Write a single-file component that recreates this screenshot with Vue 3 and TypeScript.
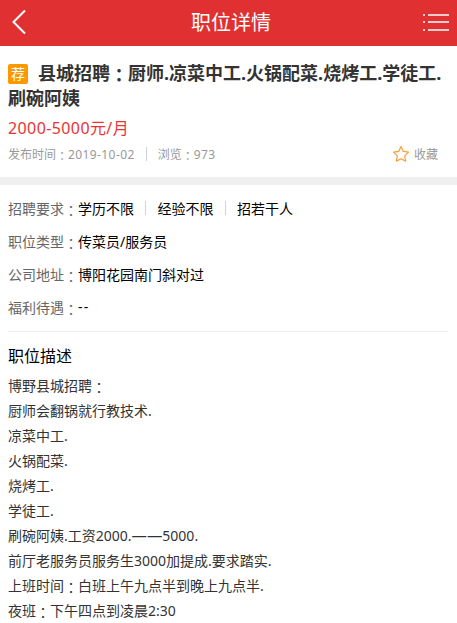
<script setup lang="ts">
interface Detail {
  label: string
  values: string[]
}

const requirements: Detail[] = [
  { label: '招聘要求', values: ['学历不限', '经验不限', '招若干人'] },
  { label: '职位类型', values: ['传菜员/服务员'] },
  { label: '公司地址', values: ['博阳花园南门斜对过'] },
  { label: '福利待遇', values: ['--'] },
]

const description: string[] = [
  '博野县城招聘：',
  '厨师会翻锅就行教技术.',
  '凉菜中工.',
  '火锅配菜.',
  '烧烤工.',
  '学徒工.',
  '刷碗阿姨.工资2000.——5000.',
  '前厅老服务员服务生3000加提成.要求踏实.',
  '上班时间：白班上午九点半到晚上九点半.',
  '夜班：下午四点到凌晨2:30',
]

// Splits off full-width colons and dashes, which have their own metrics.
const parts = (text: string): string[] => text.split(/(：|——)/).filter(Boolean)
</script>

<template>
  <div class="page">
    <header class="bar">
      <svg class="back" width="16" height="28" viewBox="0 0 16 28">
        <path d="M14 3.5 2.5 15 14 26.5" />
      </svg>
      <h1>职位详情</h1>
      <svg class="menu" width="28" height="20" viewBox="0 0 28 20">
        <path d="M1 2h2M6 2h21M1 9h2M6 9h21M1 17h2M6 17h21" />
      </svg>
    </header>

    <section class="summary">
      <h2>
        <span class="title-line"><span class="badge">荐</span><span>县城招聘</span><span class="colon">：</span><span>厨师.凉菜中工.火锅配菜.烧烤工.学徒工.</span></span>
        <span class="title-line">刷碗阿姨</span>
      </h2>
      <p class="salary">2000-5000元/月</p>
      <div class="meta">
        <span>发布时间<span class="colon">：</span><span class="date">2019-10-02</span></span>
        <i class="divider"></i>
        <span>浏览<span class="colon">：</span><span class="date">973</span></span>
        <button class="favorite" type="button">
          <svg width="18" height="18" viewBox="0 0 18 18">
            <path d="M9 1.5 11.3 6.4 16.5 7.1 12.7 10.9 13.6 16.2 9 13.7 4.4 16.2 5.3 10.9 1.5 7.1 6.7 6.4Z" />
          </svg>
          收藏
        </button>
      </div>
    </section>

    <section class="details">
      <div v-for="item in requirements" :key="item.label" class="row">
        <span class="label">{{ item.label }}<span class="colon">：</span></span>
        <template v-for="(value, i) in item.values" :key="value">
          <i v-if="i > 0" class="divider"></i>
          <span :class="{ dashes: value === '--' }">{{ value }}</span>
        </template>
      </div>
    </section>

    <section class="description">
      <h3>职位描述</h3>
      <p v-for="line in description" :key="line">
        <span v-for="(part, i) in parts(line)" :key="i" :class="{ colon: part === '：', dash: part === '——' }">{{ part }}</span>
      </p>
    </section>
  </div>
</template>

<style>
body {
  margin: 0;
  background: #fff;
  overflow: hidden;
}
</style>

<style scoped>
.page {
  height: 623px;
  overflow: hidden;
  font-family: "Noto Sans", "Noto Sans CJK SC", sans-serif;
  font-size: 14px;
  color: #333;
}
h1, h2, h3, p {
  margin: 0;
}
.colon {
  font-family: "Noto Sans CJK TC", sans-serif;
  line-height: 0;
  vertical-align: -2px;
}
.bar {
  box-sizing: border-box;
  height: 46px;
  padding: 0 7px 0 11px;
  display: flex;
  align-items: center;
  justify-content: space-between;
  background: #e03031;
  color: #fff;
}
.bar h1 {
  font-size: 20px;
  font-weight: 400;
  line-height: 46px;
  margin-left: 13px;
}
.bar svg {
  fill: none;
  stroke: #fff;
}
.back {
  stroke-width: 2;
  margin-top: -5px;
}
.menu {
  stroke-width: 1.6;
  margin-top: -1px;
}
.summary {
  box-sizing: border-box;
  height: 139px;
  padding: 15px 8px 0;
  border-bottom: 8px solid #efefef;
}
.summary h2 {
  font-size: 18px;
  line-height: 24px;
  font-weight: 700;
}
.title-line {
  display: block;
  height: 24px;
  white-space: nowrap;
}
.title-line + .title-line {
  margin-top: 1px;
}
.badge {
  display: inline-block;
  width: 20px;
  height: 20px;
  margin-right: 10px;
  border-radius: 2px;
  background: #ff9800;
  color: #fff;
  font-size: 14px;
  font-weight: 400;
  line-height: 19px;
  text-align: center;
  vertical-align: 1px;
}
.salary {
  margin-top: 6px;
  font-size: 16px;
  line-height: 24px;
  letter-spacing: 0.4px;
  color: #e93434;
}
.meta {
  display: flex;
  align-items: center;
  height: 28px;
  font-size: 12px;
  color: #999;
}
.date {
  letter-spacing: 0.4px;
}
.divider {
  width: 1px;
  height: 14px;
  margin: 0 11px;
  background: #ccd2dd;
}
.row .divider {
  margin: 0 11.5px 0 11px;
}
.favorite {
  display: flex;
  align-items: center;
  gap: 4px;
  margin-left: auto;
  padding: 0 11px 0 0;
  border: 0;
  background: none;
  color: #999;
  font: inherit;
}
.favorite svg {
  fill: none;
  stroke: #ff9c38;
  stroke-width: 1.2;
  stroke-linejoin: round;
}
.details {
  margin: 0 9px 0 8px;
  padding: 6px 0 8px;
  border-bottom: 1px solid #eee;
}
.row {
  display: flex;
  align-items: center;
  height: 33px;
  color: #000;
}
.label {
  color: #666;
}
.dashes {
  letter-spacing: 1.2px;
}
.description {
  padding: 11px 8px 0;
}
.description h3 {
  font-size: 16px;
  font-weight: 400;
  line-height: 26px;
  color: #000;
  margin-bottom: 4px;
}
.description p {
  height: 25px;
  line-height: 25px;
  white-space: nowrap;
}
.dash {
  font-size: 15.4px;
  line-height: 0;
}
</style>
